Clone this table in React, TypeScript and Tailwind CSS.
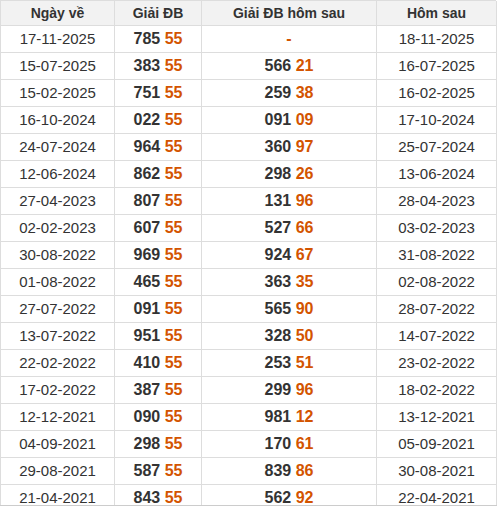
const rows: [string, string, string, string][] = [
  ["17-11-2025", "785", "-", "18-11-2025"],
  ["15-07-2025", "383", "566 21", "16-07-2025"],
  ["15-02-2025", "751", "259 38", "16-02-2025"],
  ["16-10-2024", "022", "091 09", "17-10-2024"],
  ["24-07-2024", "964", "360 97", "25-07-2024"],
  ["12-06-2024", "862", "298 26", "13-06-2024"],
  ["27-04-2023", "807", "131 96", "28-04-2023"],
  ["02-02-2023", "607", "527 66", "03-02-2023"],
  ["30-08-2022", "969", "924 67", "31-08-2022"],
  ["01-08-2022", "465", "363 35", "02-08-2022"],
  ["27-07-2022", "091", "565 90", "28-07-2022"],
  ["13-07-2022", "951", "328 50", "14-07-2022"],
  ["22-02-2022", "410", "253 51", "23-02-2022"],
  ["17-02-2022", "387", "299 96", "18-02-2022"],
  ["12-12-2021", "090", "981 12", "13-12-2021"],
  ["04-09-2021", "298", "170 61", "05-09-2021"],
  ["29-08-2021", "587", "839 86", "30-08-2021"],
  ["21-04-2021", "843", "562 92", "22-04-2021"],
];

const cell = "flex items-center justify-center border-r border-b border-[#dddddd]";

const Prize = ({ value }: { value: string }) => {
  if (value === "-") return <span className="font-bold text-[16px] text-[#d35400]">-</span>;
  const [head, tail] = value.split(" ");
  return (
    <span className="font-bold text-[16px] text-[#333333]">
      {head} <span className="text-[#d35400]">{tail}</span>
    </span>
  );
};

export default function App() {
  return (
    <div className="bg-white w-[497px] h-[506px] overflow-hidden border-b border-[#cccccc] font-['Liberation_Sans',Arial,sans-serif]">
      <div className="w-[496px] border-l border-t border-[#dddddd] grid grid-cols-[114px_87px_175px_120px] text-[#333333]">
        <div className={`${cell} h-[25px] bg-[#f2f2f2] font-bold text-[14px]`}>Ngày về</div>
        <div className={`${cell} h-[25px] bg-[#f2f2f2] font-bold text-[14px]`}>Giải ĐB</div>
        <div className={`${cell} h-[25px] bg-[#f2f2f2] font-bold text-[14px]`}>Giải ĐB hôm sau</div>
        <div className={`${cell} h-[25px] bg-[#f2f2f2] font-bold text-[14px]`}>Hôm sau</div>
        {rows.map(([d, p, n, h]) => (
          <div key={d} className="contents">
            <div className={`${cell} h-[27px] text-[15px]`}>{d}</div>
            <div className={`${cell} h-[27px]`}>
              <Prize value={`${p} 55`} />
            </div>
            <div className={`${cell} h-[27px]`}>
              <Prize value={n} />
            </div>
            <div className={`${cell} h-[27px] text-[15px]`}>{h}</div>
          </div>
        ))}
      </div>
    </div>
  );
}
